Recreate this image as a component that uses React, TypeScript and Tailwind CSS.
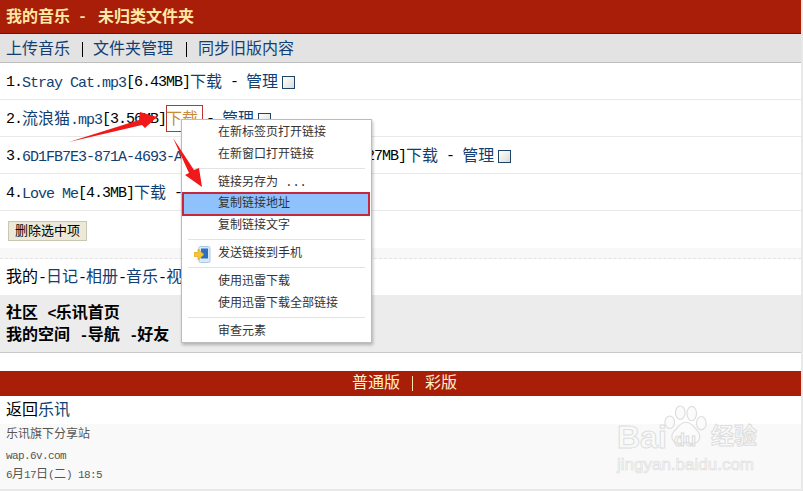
const L: React.FC<React.PropsWithChildren> = ({ children }) => (
  <span className="text-[15px] tracking-[-1px]">{children}</span>
);

const S: React.FC<React.PropsWithChildren> = ({ children }) => (
  <span className="text-[11px] tracking-[-0.6px]">{children}</span>
);

const A: React.FC<React.PropsWithChildren> = ({ children }) => (
  <span className="text-[#123f73]">{children}</span>
);

const Check = () => (
  <span className="ml-1 inline-block size-[13px] border border-[#1f4468] bg-gradient-to-br from-white to-[#dcdcd6]" />
);

const Row: React.FC<React.PropsWithChildren> = ({ children }) => (
  <div className="flex h-[37px] items-center whitespace-pre border-b border-[#e8e8e8] pl-1.5 pt-[3px]">{children}</div>
);

const Sep = () => <div className="mx-1.5 mt-[2px] mb-[3px] h-px bg-[#e3e3e3]" />;

const MenuItem: React.FC<React.PropsWithChildren<{ active?: boolean }>> = ({ children, active }) => (
  <div
    className={
      active
        ? "-mt-[2px] -mb-px mr-px flex h-[24px] items-center border-2 border-[#c4283c] bg-[#8fc1fd] pl-[34px] text-[12px] text-[#333]"
        : "flex h-[22px] items-center pl-[36px] text-[12px] text-[#333]"
    }
  >
    {children}
  </div>
);

export default function App() {
  return (
    <div className="relative h-[491px] w-[803px] overflow-hidden bg-[#e8e8e8] font-['Liberation_Mono','Noto_Sans_CJK_SC',monospace] text-[16px] leading-none text-black">
      <div className="w-[801px] bg-white">
        <div className="flex h-[34px] items-center border-b border-[#6e1206] bg-[#a81e08] pl-1.5 pt-[2px] font-bold whitespace-pre text-[#ffe7a6]">
          我的音乐<L> - </L>
          <span className="ml-1">未归类文件夹</span>
        </div>
        <div className="flex h-[29px] items-center border-b border-[#bdbdbd] bg-[#e3e3e3] pl-1.5 pt-[3px] whitespace-pre">
          <A>上传音乐</A>
          <span className="mr-[10px] ml-[12px] h-[15px] w-px bg-black" />
          <A>文件夹管理</A>
          <span className="mr-[11px] ml-[13px] h-[15px] w-px bg-black" />
          <A>同步旧版内容</A>
        </div>

        <Row>
          <L>1.</L>
          <A><L>Stray Cat.mp3</L></A>
          <L>[6.43MB]</L>
          <A>下载</A>
          <L> - </L>
          <A>管理</A>
          <Check />
        </Row>
        <Row>
          <L>2.</L>
          <A>流浪猫<L>.mp3</L></A>
          <L>[3.56MB]</L>
          <span className="text-[#c98a3a]">下载</span>
          <L> - </L>
          <A>管理</A>
          <Check />
        </Row>
        <Row>
          <L>3.</L>
          <A><L>6D1FB7E3-871A-4693-A2C4-7E19B05D3F68.mp3</L></A>
          <L>[3.27MB]</L>
          <A>下载</A>
          <L> - </L>
          <A>管理</A>
          <Check />
        </Row>
        <Row>
          <L>4.</L>
          <A><L>Love Me</L></A>
          <L>[4.3MB]</L>
          <A>下载</A>
          <L> - </L>
          <A>管理</A>
          <Check />
        </Row>

        <div className="h-[37px] pl-2 pt-[10px]">
          <button className="h-5 w-[79px] border border-[#c9c6b4] bg-[#ece9d8] text-[13px] leading-none text-black">
            删除选中项
          </button>
        </div>
        <div className="h-[11px] border-b border-dashed border-[#e2e2e2] bg-[#f8f8f8]" />

        <div className="flex h-[36px] items-center whitespace-pre pl-1.5 pt-[2px]">
          我的<L>-</L><A>日记</A><L>-</L><A>相册</A><L>-</L><A>音乐</A><L>-</L><A>视频</A>
        </div>
        <div className="flex h-[58px] flex-col justify-center gap-1.5 border-b border-[#c8c8c8] bg-[#ececec] pl-1.5 pt-[3px] font-bold whitespace-pre">
          <div>社区 <L>&lt;</L>乐讯首页</div>
          <div>我的空间 <L>-</L>导航 <L>-</L>好友</div>
        </div>
        <div className="h-[18px]" />
        <div className="flex h-[25px] items-center justify-center whitespace-pre bg-[#a81e08] pl-2 text-[#fff0cf]">
          普通版
          <span className="mx-3 h-[15px] w-px bg-[#ffe7a6]" />
          彩版
        </div>
        <div className="flex h-[28px] items-center pl-1.5 pt-[2px]">
          返回<A>乐讯</A>
        </div>
        <div className="flex h-[65px] flex-col gap-[9px] bg-[#f9f9f9] pl-1.5 pt-[5px] text-[12px] text-[#555]">
          <div>乐讯旗下分享站</div>
          <div className="leading-[12px]"><S>wap.6v.com</S></div>
          <div className="-mt-[2px] whitespace-pre">
            <S>6</S>月<S>17</S>日<S>(</S>二<S>) 18:5</S>
          </div>
        </div>
      </div>

      {/* watermark */}
      <div className="absolute top-[404px] left-[617px] h-[70px] w-[145px] select-none">
        <svg className="absolute top-0 left-[47px]" width="44" height="46" viewBox="0 0 46 46" fill="#fbfbfb" stroke="#dedede" strokeWidth="1.2">
          <ellipse cx="17" cy="8" rx="5" ry="7" />
          <ellipse cx="29" cy="9" rx="5" ry="7.5" />
          <ellipse cx="6" cy="18" rx="5" ry="6.5" />
          <ellipse cx="39" cy="19" rx="5" ry="7" />
          <path d="M23 18c6 0 8 5 12 9 4 5 3 13-5 13-3 0-5-1-7-1s-4 1-7 1c-8 0-10-8-5-13 4-4 6-9 12-9z" />
        </svg>
        <span className="absolute top-[17px] left-0 font-['Liberation_Sans',sans-serif] text-[32px] font-bold text-transparent [-webkit-text-stroke:1px_#dedede]">Bai</span>
        <span className="absolute top-[27px] left-[57px] font-['Liberation_Sans',sans-serif] text-[18px] font-bold text-transparent [-webkit-text-stroke:1px_#dcdcdc]">du</span>
        <span className="absolute top-[23px] left-[94px] text-[23px] font-bold text-transparent [-webkit-text-stroke:1px_#dedede]">经验</span>
        <span className="absolute top-[52px] left-0 font-['Liberation_Sans',sans-serif] text-[17px] text-transparent [-webkit-text-stroke:0.7px_#e0e0e0]">jingyan.baidu.com</span>
      </div>

      {/* red box round the link */}
      <div className="absolute top-[105px] left-[166px] h-[27px] w-[37px] border border-[#c0342c]" />

      {/* context menu */}
      <div className="absolute top-[119px] left-[181px] h-[224px] w-[191px] border border-[#bcbcbc] bg-white pt-[2px] shadow-[1px_2px_3px_rgba(0,0,0,0.25)]">
        <MenuItem>在新标签页打开链接</MenuItem>
        <MenuItem>在新窗口打开链接</MenuItem>
        <Sep />
        <MenuItem>链接另存为 ...</MenuItem>
        <MenuItem active>复制链接地址</MenuItem>
        <MenuItem>复制链接文字</MenuItem>
        <Sep />
        <MenuItem>
          <svg className="absolute left-[12px]" width="17" height="17" viewBox="0 0 17 17">
            <rect x="5" y="0.5" width="11" height="16" rx="1.5" fill="#dbe9f7" stroke="#a9c9e8" />
            <rect x="7" y="2.5" width="7" height="10" fill="#2f6fc0" />
            <path d="M0 6.500h4V3l6 5.500-6 5.500v-3.500H0z" fill="#f7c62f" stroke="#d79a1a" strokeWidth="0.6" />
          </svg>
          发送链接到手机
        </MenuItem>
        <Sep />
        <MenuItem>使用迅雷下载</MenuItem>
        <MenuItem>使用迅雷下载全部链接</MenuItem>
        <Sep />
        <MenuItem>审查元素</MenuItem>
      </div>

      {/* annotation arrows */}
      <svg className="pointer-events-none absolute top-0 left-0" width="803" height="491" viewBox="0 0 803 491">
        <polygon points="69,142 139,120 140,112 157,117 145,128 142,125" fill="#f01818" />
        <polygon points="173,138 194,170 199,168 202,187 185,175 189,173" fill="#f01818" />
      </svg>
    </div>
  );
}
